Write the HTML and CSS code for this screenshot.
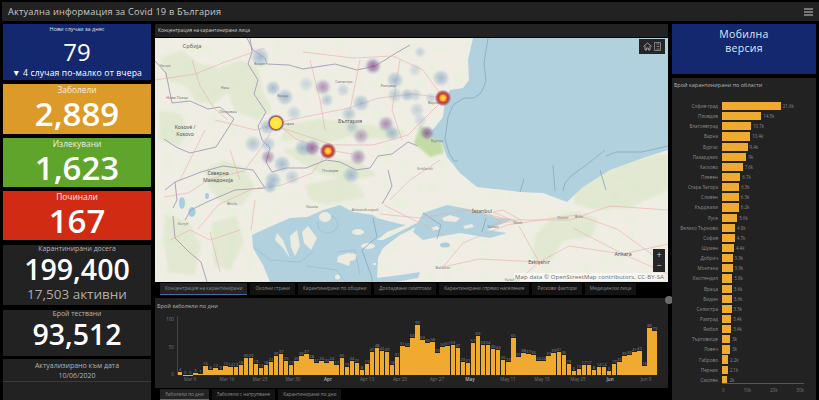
FILE: index.html
```html
<!DOCTYPE html>
<html lang="bg">
<head>
<meta charset="utf-8">
<title>Актуална информация за Covid 19 в България</title>
<link rel="stylesheet" href="styles.css">
</head>
<body>
<header class="topbar">
  <h1 class="title">Актуална информация за Covid 19 в България</h1>
  <svg class="burger" width="9" height="8" viewBox="0 0 9 8"><path d="M0 1h9M0 4h9M0 7h9" stroke="#ccc" stroke-width="1.2"/></svg>
</header>
<div class="layout">
  <aside class="left">
    <section class="card c-new"><p class="lbl-s">Нови случаи за днес</p><p class="num-s">79</p><p class="delta">▼ 4 случая по-малко от вчера</p></section>
    <section class="card c-big c-orange"><p class="lbl">Заболели</p><p class="num">2,889</p></section>
    <section class="card c-big c-green"><p class="lbl">Излекувани</p><p class="num">1,623</p></section>
    <section class="card c-big c-red"><p class="lbl">Починали</p><p class="num">167</p></section>
    <section class="card c-quar"><p class="lbl dim">Карантинирани досега</p><p class="num-m">199,400</p><p class="sub">17,503 активни</p></section>
    <section class="card c-test"><p class="lbl dim">Брой тествани</p><p class="num-m">93,512</p></section>
    <section class="card c-date"><div class="date-top"><p class="lbl dim">Актуализирано към дата</p><p class="lbl dim">10/06/2020</p></div></section>
  </aside>

  <main class="center">
    <section class="mapcard">
      <div class="maptitle">Концентрация на карантинирани лица</div>
      <div class="map">
        <svg class="mapsvg" viewBox="155 38 513 244" width="513" height="244">
          <defs>
            <filter id="soft" x="-10%" y="-10%" width="120%" height="120%"><feGaussianBlur stdDeviation="1.2"/></filter>
            <filter id="mottle" x="0" y="0" width="100%" height="100%">
              <feTurbulence type="fractalNoise" baseFrequency=".11" numOctaves="3" seed="7"/>
              <feColorMatrix type="matrix" values="0 0 0 0 .8  0 0 0 0 .885  0 0 0 0 .7  0 0 0 8 -4.500"/>
            </filter>
            <radialGradient id="hb"><stop offset="0" stop-color="#7f9dbd" stop-opacity=".65"/><stop offset=".6" stop-color="#8fb0cb" stop-opacity=".42"/><stop offset="1" stop-color="#a9c6da" stop-opacity="0"/></radialGradient>
            <radialGradient id="hp"><stop offset="0" stop-color="#8a4f8c" stop-opacity=".85"/><stop offset=".55" stop-color="#8d6ba0" stop-opacity=".55"/><stop offset="1" stop-color="#a9c6da" stop-opacity="0"/></radialGradient>
            <radialGradient id="hr"><stop offset="0" stop-color="#ffe93a"/><stop offset=".3" stop-color="#fdb52e"/><stop offset=".55" stop-color="#c8352c"/><stop offset=".75" stop-color="#a8405a" stop-opacity=".75"/><stop offset="1" stop-color="#9a7aa0" stop-opacity="0"/></radialGradient>
            <radialGradient id="hy"><stop offset="0" stop-color="#fdf04a"/><stop offset=".62" stop-color="#fbe23e"/><stop offset=".72" stop-color="#b5572f"/><stop offset=".82" stop-color="#7d6fa0" stop-opacity=".8"/><stop offset="1" stop-color="#a9c6da" stop-opacity="0"/></radialGradient>
          </defs>
          <rect x="155" y="38" width="513" height="244" fill="#f0ede5"/>
          <rect x="155" y="38" width="513" height="244" filter="url(#mottle)" opacity=".7"/>
          <g fill="#cfe2b6" filter="url(#soft)" opacity=".4">
            <path d="M160 58l22-8 18 14 16 2 12 26-14 12-18-2-10-16-20-6z"/>
            <path d="M212 70l30-10 16 8 6 26 8 16-14 10-22-8-10-22z"/>
            <path d="M159 110l22 4 8 18-10 14-20-6z"/>
            <path d="M205 170l18-10 22 8 10 20-14 18-20-4-12-14z"/>
            <path d="M165 215l24 6 12 24-6 30-26-2-6-34z"/>
            <path d="M212 222l24-6 8 26-14 28-16-4z"/>
            <path d="M285 125l34-6 40 4 46 8-6 8-50-2-30 8-24-6-14 2z"/>
            <path d="M283 150l18-4 22 12 38 4 16 14-30 4-26-6-18-10z"/>
            <path d="M305 185l34-8 20 8 6 12-38 8-18-6z"/>
            <path d="M535 235l18-18 26-6 20 8-8 18-28 4-12 20-18-2z"/>
            <path d="M575 190l36-22 32-10 25-4v36l-38 18-34 2-22-6z"/>
          </g>
          <path d="M420 125l20 10 4 18-14 4-16-14z" fill="#c3dca6" filter="url(#soft)"/>
          <path class="sea" d="M473 38L468 60 469 80 463 88 450 90 445 100 443 117 435 127 430 133 433 138 442 143 447 157 460 173 477 187 520 192 543 193 567 202 583 187 610 170 643 158 668 150V38z"/>
          <path class="sea" d="M423 213L447 205 473 210 497 218 513 219 487 230 507 233 490 238 460 233 437 237 423 240 413 232z"/>
          <path class="sea" d="M252 235L267 228 290 218 307 217 323 210 340 205 353 212 373 215 377 218 400 224 406 225 387 232 377 240 383 240 407 228 423 220 420 225 400 235 383 248 378 258 377 278 400 275 420 272 418 278 395 282H270L263 265 253 248z"/>
          <path class="land" d="M277 233L283 240 290 258 283 248 275 240zM290 236L297 230 300 246 295 256 291 247zM302 232L308 226 317 238 311 250 304 243zM319 217a6 5 0 1 0 12 0a6 5 0 1 0-12 0zM352 232a6 3 0 1 0 12 0a6 3 0 1 0-12 0zM361 246a7 3 0 1 0 14 0a7 3 0 1 0-14 0zM338 256l10-3 9 1-2 6-5 1-1 5-8-3-4-1zM335 277a2.500 2.500 0 1 0 5 0a2.500 2.500 0 1 0-5 0zM373 263h3v2h-3z"/>
          <path class="land" d="M442 218l8-3 10 3-4 4-12-1zM463 226l9-2 2 3-9 2zM431 228l6-2 3 3-7 2z"/>
          <ellipse class="lake" cx="182" cy="203" rx="3" ry="6"/><ellipse class="lake" cx="192" cy="212" rx="3.500" ry="5"/>
          <ellipse class="lake" cx="445" cy="245" rx="5" ry="2.500"/><ellipse class="lake" cx="207" cy="196" rx="2" ry="3"/>
          <g fill="none" stroke="#8aa6bb" stroke-width=".8">
            <path d="M488 38l-4 25 2 18-5 12-7 5h-10l-11 7-5 12-3 22 4 14 5 8 4 0"/>
            <path d="M605 150l-20 16-14 10-6 7-2 8M668 146l-26 6-26 0-10 4"/>
            <path d="M520 192l4-13M553 165l2 26M600 170l6 20"/>
            <path d="M373 218L377 237 362 250 372 278V282M423 213l18 12-4 14M486 218l-4 14"/>
          </g>
          <g fill="none" stroke="#8aa6bb" stroke-width=".4">
            <path d="M337 252L355 250 360 275M306 266L337 270 345 282M255 248L270 260 300 262 313 252M318 222a10 9 0 1 0 14-6"/>
          </g>
          <g fill="none" stroke="#a59ab4" stroke-width=".9">
            <path d="M247 38l6 12 12 8 2 6 22 1 14 4 32-5 22 6 18-4 10-6 11-7 14-8"/>
            <path d="M250 38l2 14-4 12 10 16-4 14 12 18-8 14 4 14 8 8-4 14 6 10 14-4 20 0 20-8 14 2 16 8 14-2 8-12 14-2 16-12 10 4"/>
            <path d="M172 103l18-2 18 8 12-2 14 12-18 28-26 6-14-6-12-8"/>
            <path d="M172 103l-6-30 -11-12"/>
            <path d="M175 182l26-10 22-6 30 4 12 18-30 2-28 12-16 8-6 10"/>
            <path d="M165 190l10-8 2 18-4 8M173 216l2 22 14 14 12 10 6 20"/>
            <path d="M382 204l6-10 4-8-4-16"/>
          </g>
          <g fill="none" stroke="#e9adad" stroke-width=".6">
            <path d="M192 60l8 26 14 22 14 12M155 80l40-6 30-12 40-14M215 120l40 10 18-5 60 20 40 0 35-10 30-30"/>
            <path d="M276 123l20 16 26 10 30 5M276 123l-14 24-18 24-34 8-22 14-24 4"/>
            <path d="M328 151l-16 22-30 12-30 4-34 16-20 24M443 98l-30-4-34 4-30 10-50 10-23 5"/>
            <path d="M443 98l-20-28-30-14-40 2-50-6M443 267l20-24 24-10 20-8 40-6 30-4 40 14 36 26"/>
            <path d="M443 267l36-8 60 3 30-16 54 8 45-10M470 210l-50 8-40-4M470 210l40 10 60 0 40-14 58 4"/>
            <path d="M539 262l-20-36M539 262l-20 18M623 254l45 20M623 254l-50-26M384 205l60 30M210 232l10 40M255 200l-4 30"/>
            <path d="M489 214l12 8-8 3 14-3 10 0-24-10 10-2 18 10M205 130l-15 30-10 20M230 150l10 30M310 60l10 40 5 30M360 60l-10 50M400 60l-8 50 10 30M170 240l20-10 20 10 30-10M440 160l-30 20-20 20"/>
          </g>
          <g class="heat">
            <circle cx="260" cy="57" r="10" fill="url(#hb)"/><circle cx="373" cy="66" r="9" fill="url(#hp)"/><circle cx="395" cy="80" r="9" fill="url(#hb)"/>
            <circle cx="273" cy="88" r="8" fill="url(#hb)"/><circle cx="323" cy="87" r="9" fill="url(#hp)" opacity=".7"/><circle cx="285" cy="97" r="9" fill="url(#hb)"/>
            <circle cx="306" cy="84" r="8" fill="url(#hb)" opacity=".5"/><circle cx="327" cy="100" r="7" fill="url(#hb)" opacity=".8"/><circle cx="343" cy="90" r="7" fill="url(#hb)" opacity=".6"/>
            <circle cx="361" cy="103" r="9" fill="url(#hb)"/><circle cx="349" cy="114" r="8" fill="url(#hb)" opacity=".8"/><circle cx="395" cy="95" r="8" fill="url(#hb)" opacity=".7"/>
            <circle cx="407" cy="95" r="7" fill="url(#hb)"/><circle cx="294" cy="113" r="8" fill="url(#hb)" opacity=".6"/><circle cx="386" cy="124" r="9" fill="url(#hp)" opacity=".75"/>
            <circle cx="392" cy="133" r="8" fill="url(#hb)"/><circle cx="361" cy="136" r="9" fill="url(#hp)" opacity=".6"/><circle cx="352" cy="127" r="7" fill="url(#hb)" opacity=".7"/>
            <circle cx="267" cy="127" r="8" fill="url(#hb)"/><circle cx="253" cy="144" r="9" fill="url(#hb)" opacity=".8"/><circle cx="268" cy="144" r="8" fill="url(#hb)" opacity=".8"/>
            <circle cx="303" cy="148" r="9" fill="url(#hb)"/><circle cx="312" cy="148" r="9" fill="url(#hp)"/><circle cx="268" cy="157" r="8" fill="url(#hp)" opacity=".7"/>
            <circle cx="358" cy="157" r="9" fill="url(#hp)" opacity=".75"/><circle cx="282" cy="164" r="9" fill="url(#hb)"/><circle cx="273" cy="180" r="9" fill="url(#hb)"/>
            <circle cx="270" cy="187" r="7" fill="url(#hb)"/><circle cx="292" cy="177" r="8" fill="url(#hb)" opacity=".7"/><circle cx="351" cy="175" r="9" fill="url(#hb)"/>
            <circle cx="441" cy="78" r="9" fill="url(#hb)"/><circle cx="415" cy="70" r="7" fill="url(#hb)" opacity=".5"/><circle cx="417" cy="110" r="8" fill="url(#hb)" opacity=".6"/>
            <circle cx="420" cy="120" r="7" fill="url(#hb)" opacity=".5"/><circle cx="415" cy="95" r="7" fill="url(#hb)" opacity=".6"/><circle cx="420" cy="52" r="6" fill="url(#hb)" opacity=".6"/>
            <circle cx="427" cy="133" r="8" fill="url(#hp)"/><circle cx="431" cy="98" r="6" fill="url(#hb)" opacity=".6"/>
            <circle cx="443" cy="98" r="8.500" fill="url(#hr)"/><circle cx="328" cy="151" r="8.500" fill="url(#hr)"/><circle cx="276" cy="123" r="9" fill="url(#hy)"/>
          </g>
          <g class="labels">
            <text x="192" y="48" class="t-l" text-anchor="middle">Србија</text>
            <text x="185" y="129" class="t-m" text-anchor="middle">Kosovë /</text><text x="185" y="136" class="t-m" text-anchor="middle">Kosovo</text>
            <text x="218" y="175" class="t-m" text-anchor="middle">Северна</text><text x="218" y="182" class="t-m" text-anchor="middle">Македонија</text>
            <text x="350" y="123" class="t-m" text-anchor="middle">България</text>
            <text x="344" y="83" class="t-s" text-anchor="middle">Силистра</text><text x="388" y="87" class="t-s" text-anchor="middle">Разград</text>
            <text x="283" y="97" class="t-s" text-anchor="middle">Враца</text><text x="260" y="65" class="t-s" text-anchor="middle">Видин</text>
            <text x="225" y="89" class="t-s" text-anchor="middle">Ниш</text><text x="228" y="113" class="t-s" text-anchor="middle">Лесковац</text>
            <text x="165" y="67" class="t-s" text-anchor="middle">Чачак</text><text x="177" y="99" class="t-s" text-anchor="middle">Нови Пазар</text>
            <text x="282" y="125" class="t-s">София</text><text x="322" y="172" class="t-s">Пловдив</text>
            <text x="431" y="142" class="t-s">Бургас</text><text x="428" y="104" class="t-s">Варна</text>
            <text x="482" y="213" class="t-m" text-anchor="middle">İstanbul</text><text x="518" y="224" class="t-s" text-anchor="middle">İzmit</text>
            <text x="563" y="219" class="t-s" text-anchor="middle">Düzce</text><text x="579" y="218" class="t-s" text-anchor="middle">Bolu</text>
            <text x="493" y="228" class="t-s" text-anchor="middle">Yalova</text><text x="443" y="269" class="t-s" text-anchor="middle">Balıkesir</text>
            <text x="539" y="264" class="t-m" text-anchor="middle">Eskişehir</text><text x="623" y="256" class="t-m" text-anchor="middle">Ankara</text>
            <text x="512" y="281" class="t-s" text-anchor="middle">Kütahya</text><text x="425" y="170" class="t-s" text-anchor="middle">Kırklareli</text>
            <text x="232" y="205" class="t-s" text-anchor="middle">Bitola</text><text x="365" y="211" class="t-s" text-anchor="middle">Alexandroupoli</text>
            <text x="312" y="208" class="t-s" text-anchor="middle">Kavala</text><text x="183" y="225" class="t-s" text-anchor="middle">Korçë</text>
          </g>
        </svg>
        <div class="widgets">
          <svg width="9" height="9" viewBox="0 0 9 9"><path d="M.5 4.500L4.500 1l4 3.500M2 4v4h1.600V6h1.800v2H7V4" fill="none" stroke="#aaa" stroke-width=".9"/></svg>
          <svg width="7" height="9" viewBox="0 0 7 9"><path d="M.5.500h6v8h-6zM2.500 2h3M2.500 4.500h3M2.500 7h3" fill="none" stroke="#888" stroke-width=".9"/></svg>
        </div>
        <div class="zoomctl"><span>+</span><span>−</span></div>
        <div class="attr">Map data © OpenStreetMap contributors, CC-BY-SA</div>
      </div>
      <nav class="tabs">
        <span class="tab on">Концентрация на карантинирани</span>
        <span class="tab">Околни страни</span>
        <span class="tab">Карантинирани по общини</span>
        <span class="tab">Докладвани симптоми</span>
        <span class="tab">Карантинирани спрямо население</span>
        <span class="tab">Рискови фактори</span>
        <span class="tab">Медицински лица</span>
      </nav>
    </section>

    <section class="daily">
      <h2 class="ptitle">Брой заболели по дни</h2>
      <div class="expander"></div>
      <div class="plot">
        <span class="yl y100">100</span><span class="yl y50">50</span><span class="yl y0">0</span>
        <div class="bars">
<b style="--v:4"><u>4</u></b><b style="--v:0"><u>0</u></b><b style="--v:0"><u>0</u></b><b style="--v:3"><u>3</u></b><b style="--v:1"><u>1</u></b>
<b style="--v:16"><u>16</u></b><b style="--v:8"><u>8</u></b><b style="--v:12"><u>12</u></b><b style="--v:9"><u>9</u></b><b style="--v:15"><u>15</u></b>
<b style="--v:14"><u>14</u></b><b style="--v:13"><u>13</u></b><b style="--v:18"><u>18</u></b><b style="--v:30"><u>30</u></b><b style="--v:29"><u>29</u></b>
<b style="--v:19"><u>19</u></b><b style="--v:12"><u>12</u></b><b style="--v:18"><u>18</u></b><b style="--v:22"><u>22</u></b><b style="--v:33"><u>33</u></b>
<b style="--v:37"><u>37</u></b><b style="--v:25"><u>25</u></b><b style="--v:17"><u>17</u></b><b style="--v:25"><u>25</u></b><b style="--v:33"><u>33</u></b>
<b style="--v:37"><u>37</u></b><b style="--v:28"><u>28</u></b><b style="--v:21"><u>21</u></b><b style="--v:24"><u>24</u></b><b style="--v:20"><u>20</u></b>
<b style="--v:24"><u>24</u></b><b style="--v:17"><u>17</u></b><b style="--v:30"><u>30</u></b><b style="--v:13"><u>13</u></b><b style="--v:24"><u>24</u></b>
<b style="--v:21"><u>21</u></b><b style="--v:8"><u>8</u></b><b style="--v:19"><u>19</u></b><b style="--v:40"><u>40</u></b><b style="--v:48"><u>48</u></b>
<b style="--v:42"><u>42</u></b><b style="--v:40"><u>40</u></b><b style="--v:18"><u>18</u></b><b style="--v:31"><u>31</u></b><b style="--v:51"><u>51</u></b>
<b style="--v:50"><u>50</u></b><b style="--v:66"><u>66</u></b><b style="--v:90"><u>90</u></b><b style="--v:63"><u>63</u></b><b style="--v:56"><u>56</u></b>
<b style="--v:58"><u>58</u></b><b style="--v:39"><u>39</u></b><b style="--v:50"><u>50</u></b><b style="--v:51"><u>51</u></b><b style="--v:53"><u>53</u></b>
<b style="--v:47"><u>47</u></b><b style="--v:23"><u>23</u></b><b style="--v:21"><u>21</u></b><b style="--v:57"><u>57</u></b><b style="--v:69"><u>69</u></b>
<b style="--v:53"><u>53</u></b><b style="--v:54"><u>54</u></b><b style="--v:46"><u>46</u></b><b style="--v:44"><u>44</u></b><b style="--v:26"><u>26</u></b>
<b style="--v:23"><u>23</u></b><b style="--v:65"><u>65</u></b><b style="--v:31"><u>31</u></b><b style="--v:38"><u>38</u></b><b style="--v:37"><u>37</u></b>
<b style="--v:36"><u>36</u></b><b style="--v:24"><u>24</u></b><b style="--v:24"><u>24</u></b><b style="--v:33"><u>33</u></b><b style="--v:39"><u>39</u></b>
<b style="--v:41"><u>41</u></b><b style="--v:36"><u>36</u></b><b style="--v:19"><u>19</u></b><b style="--v:6"><u>6</u></b><b style="--v:10"><u>10</u></b>
<b style="--v:17"><u>17</u></b><b style="--v:17"><u>17</u></b><b style="--v:8"><u>8</u></b><b style="--v:14"><u>14</u></b><b style="--v:14"><u>14</u></b>
<b style="--v:6"><u>6</u></b><b style="--v:19"><u>19</u></b><b style="--v:22"><u>22</u></b><b style="--v:33"><u>33</u></b><b style="--v:36"><u>36</u></b>
<b style="--v:41"><u>41</u></b><b style="--v:43"><u>43</u></b><b style="--v:16"><u>16</u></b><b style="--v:83"><u>83</u></b><b style="--v:79"><u>79</u></b>
        </div>
        <div class="xaxis">
          <span style="--x:12">Mar 9</span><span style="--x:49">Mar 16</span><span style="--x:82">Mar 23</span><span style="--x:115">Mar 30</span><span class="strong" style="--x:150">Apr</span><span style="--x:189">Apr 13</span><span style="--x:222">Apr 20</span><span style="--x:259">Apr 27</span><span class="strong" style="--x:292">May</span><span style="--x:330">May 11</span><span style="--x:364">May 18</span><span style="--x:400">May 25</span><span class="strong" style="--x:432">Jun</span><span style="--x:468">Jun 9</span>
        </div>
      </div>
    </section>
    <nav class="tabs tabs-b">
      <span class="tab on">Заболели по дни</span>
      <span class="tab">Заболели с натрупване</span>
      <span class="tab">Карантинирани по дни</span>
    </nav>
  </main>

  <aside class="right">
    <a class="mobile">Мобилна<br>версия</a>
    <section class="regions">
      <h2 class="ptitle">Брой карантинирани по области</h2>
      <div class="rows">
        <div class="row"><span class="rn">София-град</span><i style="--k:21.6"></i><em>21.6k</em></div>
        <div class="row"><span class="rn">Пловдив</span><i style="--k:14.5"></i><em>14.5k</em></div>
        <div class="row"><span class="rn">Благоевград</span><i style="--k:10.7"></i><em>10.7k</em></div>
        <div class="row"><span class="rn">Варна</span><i style="--k:10.4"></i><em>10.4k</em></div>
        <div class="row"><span class="rn">Бургас</span><i style="--k:9.4"></i><em>9.4k</em></div>
        <div class="row"><span class="rn">Пазарджик</span><i style="--k:9"></i><em>9k</em></div>
        <div class="row"><span class="rn">Хасково</span><i style="--k:7.6"></i><em>7.6k</em></div>
        <div class="row"><span class="rn">Плевен</span><i style="--k:6.7"></i><em>6.7k</em></div>
        <div class="row"><span class="rn">Стара Загора</span><i style="--k:6.3"></i><em>6.3k</em></div>
        <div class="row"><span class="rn">Сливен</span><i style="--k:6.2"></i><em>6.3k</em></div>
        <div class="row"><span class="rn">Кърджали</span><i style="--k:6.2"></i><em>6.2k</em></div>
        <div class="row"><span class="rn">Русе</span><i style="--k:5.6"></i><em>5.6k</em></div>
        <div class="row"><span class="rn">Велико Търново</span><i style="--k:4.8"></i><em>4.8k</em></div>
        <div class="row"><span class="rn">София</span><i style="--k:4.7"></i><em>4.7k</em></div>
        <div class="row"><span class="rn">Шумен</span><i style="--k:4.4"></i><em>4.4k</em></div>
        <div class="row"><span class="rn">Добрич</span><i style="--k:3.9"></i><em>3.9k</em></div>
        <div class="row"><span class="rn">Монтана</span><i style="--k:3.9"></i><em>3.9k</em></div>
        <div class="row"><span class="rn">Кюстендил</span><i style="--k:3.8"></i><em>3.8k</em></div>
        <div class="row"><span class="rn">Враца</span><i style="--k:3.6"></i><em>3.6k</em></div>
        <div class="row"><span class="rn">Видин</span><i style="--k:3.6"></i><em>3.6k</em></div>
        <div class="row"><span class="rn">Силистра</span><i style="--k:3.5"></i><em>3.5k</em></div>
        <div class="row"><span class="rn">Разград</span><i style="--k:3.4"></i><em>3.4k</em></div>
        <div class="row"><span class="rn">Ямбол</span><i style="--k:3.4"></i><em>3.4k</em></div>
        <div class="row"><span class="rn">Търговище</span><i style="--k:3"></i><em>3k</em></div>
        <div class="row"><span class="rn">Ловеч</span><i style="--k:3"></i><em>3k</em></div>
        <div class="row"><span class="rn">Габрово</span><i style="--k:2.2"></i><em>2.2k</em></div>
        <div class="row"><span class="rn">Перник</span><i style="--k:2.1"></i><em>2.1k</em></div>
        <div class="row"><span class="rn">Смолян</span><i style="--k:2"></i><em>2k</em></div>
      </div>
      <div class="haxis"><span>0</span><span>10k</span><span>20k</span><span>30k</span></div>
    </section>
  </aside>
</div>
</body>
</html>
```

FILE: styles.css
```css
* { box-sizing: border-box; margin: 0; padding: 0; }
html, body { width: 819px; height: 400px; overflow: hidden; background: #000; }
body { font-family: "Open Sans", "Noto Sans", sans-serif; color: #d8d8d8; padding: 2px 3px 0 3px; }

.topbar { height: 19px; background: #222; display: flex; align-items: center; justify-content: space-between; padding: 0 6px; margin: 0 0 3px -1px; width: 817px; }
.title { font-size: 9.200px; font-weight: 400; color: #c8c8c8; letter-spacing: .2px; }
.burger { display: block; }

.layout { display: grid; grid-template-columns: 148px 513px 144px; column-gap: 4px; height: 376px; }

.left { display: flex; flex-direction: column; gap: 4px; }
.card { text-align: center; }
.card p { line-height: 1; }
.c-new { height: 56px; background: #14286f; color: #fff; padding-top: 3px; }
.lbl-s { font-size: 5.500px; color: #dfe3f0; }
.num-s { font-size: 24px; font-weight: 500; margin-top: 7px; }
.delta { font-size: 8.600px; margin-top: 5px; letter-spacing: .15px; white-space: nowrap; }
.c-big { height: 50px; color: #fff; padding-top: 2px; }
.c-orange { background: #dc9b28; }
.c-green { background: #5fa42b; height: 49px; }
.c-red { background: #d22b14; height: 49px; }
.lbl { font-size: 8.400px; color: #f2efe4; }
.num { font-size: 33px; font-weight: 550; margin-top: 3px; line-height: 34px !important; }
.dim { color: #b4b4b4; }
.c-quar, .c-test, .c-date { background: #222; color: #fff; }
.c-quar { height: 60px; margin-top: 1px; padding-top: 1px; }
.c-test { height: 46px; margin-top: 1px; padding-top: 1px; }
.c-date { height: 41px; margin-top: -1px; }
.c-quar .lbl, .c-test .lbl { font-size: 6.900px; }
.num-m { font-size: 28.500px; font-weight: 550; line-height: 30px !important; margin-top: 1px; }
.sub { font-size: 13.500px; color: #aeaeae; margin-top: 4px; }
.date-top { height: 23px; border-bottom: 1px solid #3a3a3a; padding-top: 2px; }
.date-top .lbl { font-size: 7px; line-height: 9.500px; }

.center { display: flex; flex-direction: column; }
.mapcard { height: 271px; }
.maptitle { height: 13px; background: #222; font-size: 4.800px; line-height: 13px; padding-left: 3px; color: #cfcfcf; margin-bottom: 1px; }
.map { position: relative; width: 513px; height: 244px; overflow: hidden; }
.mapsvg { display: block; }
.sea { fill: #b2d1de; }
.land { fill: #ecebdf; }
.lake { fill: #a6cde0; }
.t-l { font: 5.800px "Noto Sans", sans-serif; fill: #666; }
.t-m { font: 5.200px "Noto Sans", sans-serif; fill: #555; }
.t-s { font: 3.800px "Noto Sans", sans-serif; fill: #777; }
.widgets { position: absolute; top: 1px; right: 3px; width: 26px; height: 15px; background: #262626; display: flex; align-items: center; justify-content: space-around; padding: 0 3px; }
.zoomctl { position: absolute; top: 211px; right: 3px; width: 12px; height: 23px; background: #262626; color: #ccc; display: flex; flex-direction: column; align-items: center; justify-content: space-around; font-size: 9px; line-height: 10px; }
.attr { position: absolute; right: 4px; bottom: 1px; font-size: 6px; line-height: 8px; color: #6b6b6b; background: rgba(255,255,255,.5); padding-left: 1px; letter-spacing: .1px; }

.tabs { display: flex; height: 12px; margin-top: 1px; padding-left: 5px; gap: 3px; }
.tab { font-size: 4.700px; line-height: 11px; padding: 0 5px; color: #8f8f8f; background: #131313; white-space: nowrap; }
.tab.on { background: #232323; color: #8a8a8a; border-bottom: 1px solid #3f6fb0; }

.daily { position: relative; height: 90px; margin-top: 3px; background: #222; }
.ptitle { font-size: 5.600px; font-weight: 400; color: #b5b5b5; padding: 4px 0 0 2px; line-height: 8px; }
.expander { position: absolute; top: -2px; right: -5px; width: 8px; height: 8px; border-radius: 50%; background: #6b6b6b; }
.plot { position: relative; height: 78px; }
.yl { position: absolute; left: 0; width: 19px; text-align: right; font-size: 4.600px; line-height: 5px; color: #777; }
.y100 { top: 7px; } .y50 { top: 34.500px; } .y0 { top: 62px; }
.bars { position: absolute; left: 22px; right: 11px; top: 6px; height: 59px; display: flex; align-items: flex-end; border-left: 1px solid #444; }
.bars b { position: relative; flex: 1 1 0; height: calc(var(--v) * .555px + .5px); background: #efaa2f; margin-right: .6px; font-weight: 400; }
.bars u { position: absolute; left: -3px; right: -3px; bottom: 100%; text-align: center; font-size: 4.200px; line-height: 5px; color: #8a8a8a; text-decoration: none; }
.xaxis { position: absolute; left: 23px; right: 11px; top: 66px; height: 7px; }
.xaxis span { position: absolute; left: calc(var(--x) * 1px - 10px); width: 20px; text-align: center; font-size: 4.600px; line-height: 7px; color: #777; }
.xaxis .strong { color: #bbb; font-weight: 600; }
.tabs-b { height: 11px; margin-top: 1px; }

.right { display: flex; flex-direction: column; gap: 4px; }
.mobile { height: 50px; background: #14286f; color: #dfe6f6; font-size: 10.500px; line-height: 13.500px; text-align: center; padding-top: 4px; letter-spacing: .3px; }
.regions { flex: 1; background: #222; position: relative; }
.regions .ptitle { font-size: 5.500px; padding: 3px 0 0 2px; }
.rows { position: absolute; top: 23px; left: 0; right: 0; display: flex; flex-direction: column; }
.row { height: 10.150px; display: flex; align-items: center; }
.rn { width: 46px; text-align: right; font-size: 4.700px; color: #8d8d8d; white-space: nowrap; margin-right: 4px; flex: none; }
.row i { display: block; height: 8.200px; width: calc(var(--k) * 2.720px); background: #efaa2f; flex: none; }
.row em { font-style: normal; font-size: 4.400px; color: #8a8a8a; margin-left: 2px; }
.haxis { position: absolute; left: 50px; top: 305px; width: 82px; display: flex; justify-content: space-between; font-size: 4.600px; color: #777; border-top: 1px solid #555; line-height: 12px; }
```
